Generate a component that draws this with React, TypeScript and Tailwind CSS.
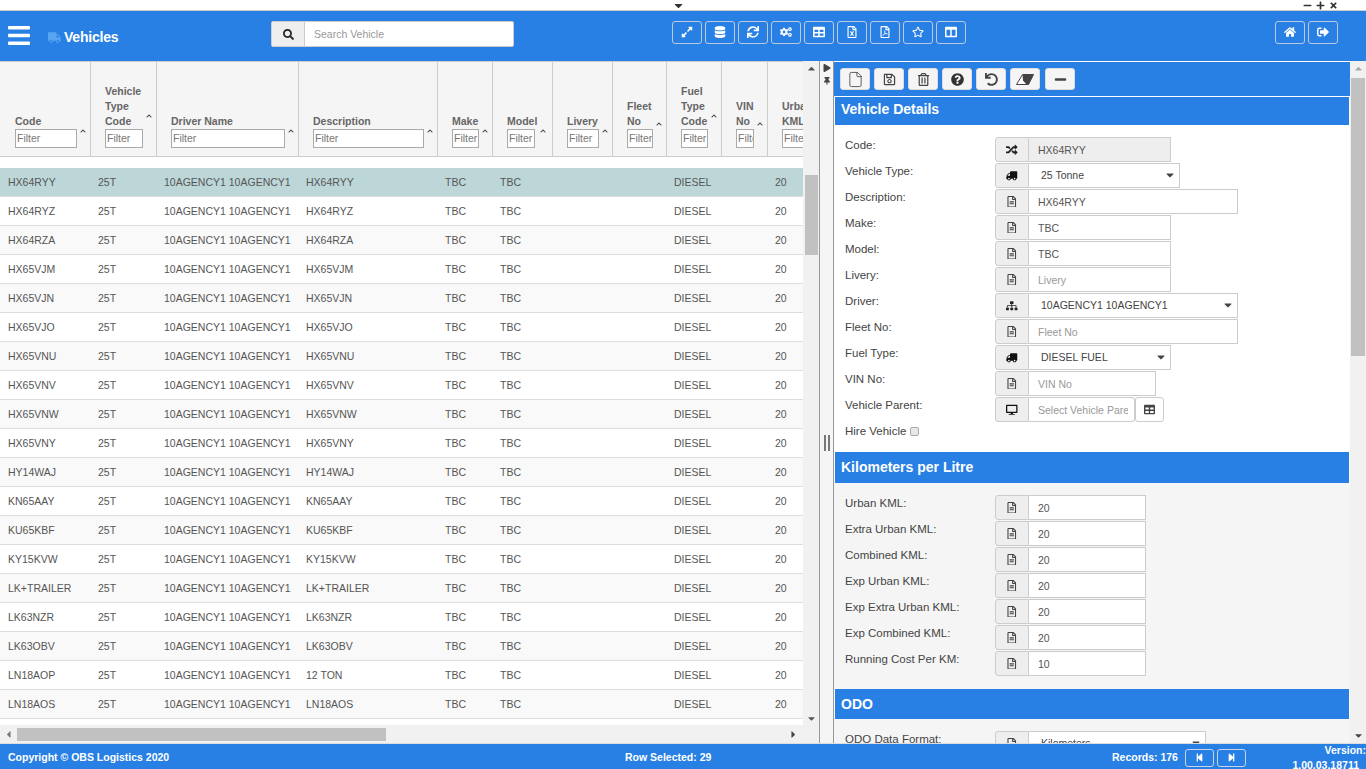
import type { ReactNode } from 'react';
import {
  FaBars, FaCaretDown, FaCaretLeft, FaCaretRight, FaCaretUp, FaChevronUp, FaCogs, FaColumns, FaDatabase,
  FaDesktop, FaExpandAlt, FaHome, FaMinus, FaPlay, FaPlus, FaQuestionCircle, FaRandom, FaRegFileAlt,
  FaRegFileExcel, FaRegFilePdf, FaRegSave, FaRegStar, FaRegTrashAlt, FaSearch, FaSignOutAlt, FaSitemap,
  FaStepBackward, FaStepForward, FaSync, FaTable, FaThumbtack, FaTimes, FaTruck, FaUndo,
} from 'react-icons/fa';
import { File } from 'lucide-react';

const columns = [
  { key: 'code', label: ['Code'], cell: 'w-[91px]', filter: 'w-[62px]' },
  { key: 'type', label: ['Vehicle', 'Type', 'Code'], cell: 'w-[66px]', filter: 'w-[38px]' },
  { key: 'driver', label: ['Driver Name'], cell: 'w-[142px]', filter: 'w-[114px]' },
  { key: 'desc', label: ['Description'], cell: 'w-[139px]', filter: 'w-[111px]' },
  { key: 'make', label: ['Make'], cell: 'w-[55px]', filter: 'w-[27px]' },
  { key: 'model', label: ['Model'], cell: 'w-[60px]', filter: 'w-[28px]' },
  { key: 'livery', label: ['Livery'], cell: 'w-[60px]', filter: 'w-[32px]' },
  { key: 'fleet', label: ['Fleet', 'No'], cell: 'w-[54px]', filter: 'w-[26px]' },
  { key: 'fuel', label: ['Fuel', 'Type', 'Code'], cell: 'w-[55px]', filter: 'w-[27px]' },
  { key: 'vin', label: ['VIN', 'No'], cell: 'w-[46px]', filter: 'w-[18px]' },
  { key: 'urban', label: ['Urban', 'KML'], cell: 'w-[60px]', filter: 'w-[32px]' },
];

const codes = [
  'HX64RYY', 'HX64RYZ', 'HX64RZA', 'HX65VJM', 'HX65VJN', 'HX65VJO', 'HX65VNU', 'HX65VNV', 'HX65VNW', 'HX65VNY',
  'HY14WAJ', 'KN65AAY', 'KU65KBF', 'KY15KVW', 'LK+TRAILER', 'LK63NZR', 'LK63OBV', 'LN18AOP', 'LN18AOS',
];

const kmlFields = [
  ['Urban KML:', '20'],
  ['Extra Urban KML:', '20'],
  ['Combined KML:', '20'],
  ['Exp Urban KML:', '20'],
  ['Exp Extra Urban KML:', '20'],
  ['Exp Combined KML:', '20'],
  ['Running Cost Per KM:', '10'],
];

function HeaderButton({ children }: { children: ReactNode }) {
  return (
    <button className="flex h-[23px] w-[30px] items-center justify-center rounded-[3px] border border-[#b9c9df] pb-[2px] text-[12px] text-white">
      {children}
    </button>
  );
}

function ToolButton({ children }: { children: ReactNode }) {
  return (
    <button className="flex h-[22px] w-[30px] items-center justify-center rounded-[3px] border border-[#ddd] bg-[#f5f5f5] text-[13px] text-[#444]">
      {children}
    </button>
  );
}

function SectionTitle({ children, size }: { children: ReactNode; size: string }) {
  return (
    <div className={`${size} mx-px flex items-center bg-[#2980e4] pl-[6px] text-[14px] font-bold text-white`}>
      {children}
    </div>
  );
}

function Addon({ children }: { children: ReactNode }) {
  return (
    <span className="flex h-[25px] w-[34px] shrink-0 items-center justify-center rounded-l-[3px] border border-[#ccc] bg-[#eee] text-[11.5px] text-[#444]">
      {children}
    </span>
  );
}

function FormRow({ label, children }: { label: string; children: ReactNode }) {
  return (
    <div className="flex h-[26px] pl-[11px]">
      <label className="w-[150px] shrink-0 pt-[1px] text-[11.5px] leading-[14px] text-[#444]">{label}</label>
      {children}
    </div>
  );
}

function TextField({ label, value, placeholder, width, disabled }: {
  label: string;
  value?: string;
  placeholder?: string;
  width: string;
  disabled?: boolean;
}) {
  return (
    <FormRow label={label}>
      <div className={`${width} flex`}>
        <Addon>{disabled ? <FaRandom className="text-[#222]" /> : <FaRegFileAlt />}</Addon>
        <input
          readOnly
          value={value ?? ''}
          placeholder={placeholder}
          className={`h-[25px] min-w-0 flex-1 border border-l-0 border-[#ccc] pl-[9px] text-[10.5px] text-[#555] outline-none placeholder:text-[#999] ${disabled ? 'bg-[#eee]' : 'bg-white'}`}
        />
      </div>
    </FormRow>
  );
}

function SelectField({ label, value, width, icon }: { label: string; value: string; width: string; icon: ReactNode }) {
  return (
    <FormRow label={label}>
      <div className={`${width} flex`}>
        <Addon>{icon}</Addon>
        <div className="flex h-[25px] min-w-0 flex-1 items-center justify-between border border-l-0 border-[#ccc] bg-white pl-[12px] pr-[3px] pt-px text-[10.5px] text-[#444]">
          <span>{value}</span>
          <FaCaretDown className="mb-[3px] text-[12px] text-[#444]" />
        </div>
      </div>
    </FormRow>
  );
}

export default function App() {
  return (
    <div className="flex h-[769px] w-[1366px] flex-col overflow-hidden bg-white font-['Liberation_Sans',Arial,sans-serif]">
      {/* top strip */}
      <div className="flex h-[11px] shrink-0 items-center border-b border-[#ccc] text-[#333]">
        <FaCaretDown className="ml-[672px] text-[13px]" />
        <div className="ml-[618px] mt-px flex gap-[4px] text-[9px]">
          <FaMinus />
          <FaPlus />
          <FaTimes />
        </div>
      </div>

      {/* header */}
      <header className="flex h-[50px] shrink-0 bg-[#2980e4] pl-[8px] pt-[10px]">
        <FaBars className="mt-[2px] h-[25px] w-[22px] text-white" />
        <FaTruck className="ml-[18px] mt-[10px] text-[13px] text-[#5aa5f0]" />
        <span className="ml-[3px] mt-[8px] w-[207px] text-[14px] font-bold leading-[16px] tracking-[-0.2px] text-white">Vehicles</span>
        <div className="flex h-[26px] w-[243px] rounded-[2px] border border-[#ccc] bg-white">
          <span className="flex w-[33px] items-center justify-center border-r border-[#ccc] bg-[#eee] text-[11px] text-[#222]">
            <FaSearch />
          </span>
          <input placeholder="Search Vehicle" readOnly className="min-w-0 flex-1 pl-[9px] pt-px text-[10.5px] outline-none placeholder:text-[#999]" />
        </div>
        <div className="ml-[158px] flex gap-[3px]">
          <HeaderButton><FaExpandAlt /></HeaderButton>
          <HeaderButton><FaDatabase /></HeaderButton>
          <HeaderButton><FaSync /></HeaderButton>
          <HeaderButton><FaCogs /></HeaderButton>
          <HeaderButton><FaTable /></HeaderButton>
          <HeaderButton><FaRegFileExcel /></HeaderButton>
          <HeaderButton><FaRegFilePdf /></HeaderButton>
          <HeaderButton><FaRegStar /></HeaderButton>
          <HeaderButton><FaColumns /></HeaderButton>
        </div>
        <div className="ml-[309px] flex gap-[3px]">
          <HeaderButton><FaHome /></HeaderButton>
          <HeaderButton><FaSignOutAlt /></HeaderButton>
        </div>
      </header>

      <div className="flex min-h-0 flex-1">
        {/* vehicle list */}
        <div className="flex w-[819px] shrink-0 flex-col">
          <div className="flex min-h-0 flex-1">
            <div className="w-[803px] shrink-0 overflow-hidden">
              <div className="flex h-[96px] w-[900px] border-y border-[#ccc] bg-[#f5f5f5]">
                {columns.map((col) => (
                  <div key={col.key} className={`${col.cell} flex shrink-0 items-end border-r border-[#ccc] pb-[8px] pl-[14px] first:pl-[15px]`}>
                    <div className="flex items-center">
                      <div>
                        <div className="text-[10.5px] font-bold leading-[15px] text-[#666]">
                          {col.label.map((line) => (
                            <div key={line}>{line}</div>
                          ))}
                        </div>
                        <input
                          readOnly
                          placeholder="Filter"
                          className={`${col.filter} block h-[19px] border border-[#aaa] bg-white pb-[2px] pl-px text-[10.5px] outline-none placeholder:text-[#777]`}
                        />
                      </div>
                      <FaChevronUp className="ml-[3px] text-[6px] text-[#444]" />
                    </div>
                  </div>
                ))}
              </div>
              <div className="mt-[11px]">
                {codes.map((code, i) => (
                  <div
                    key={code}
                    className={`flex h-[29px] w-[900px] items-center border-b border-[#ddd] pt-px text-[10.5px] text-[#555] ${i === 0 ? 'bg-[#bdd7d9]' : i % 2 === 0 ? 'bg-[#f9f9f9]' : 'bg-white'}`}
                  >
                    <span className="w-[90px] shrink-0 pl-2">{code}</span>
                    <span className="w-[66px] shrink-0 pl-2">25T</span>
                    <span className="w-[142px] shrink-0 pl-2">10AGENCY1 10AGENCY1</span>
                    <span className="w-[139px] shrink-0 pl-2">{code === 'LN18AOP' ? '12 TON' : code}</span>
                    <span className="w-[55px] shrink-0 pl-2">TBC</span>
                    <span className="w-[174px] shrink-0 pl-2">TBC</span>
                    <span className="w-[101px] shrink-0 pl-2">DIESEL</span>
                    <span className="shrink-0 pl-2">20</span>
                  </div>
                ))}
              </div>
            </div>
            {/* list scrollbar */}
            <div className="flex w-[16px] shrink-0 flex-col items-center bg-[#f1f1f1] text-[#555]">
              <FaCaretUp className="mt-[2px] text-[11px]" />
              <div className="mt-[101px] h-[80px] w-[13px] bg-[#c1c1c1]" />
              <FaCaretDown className="mt-auto mb-[1px] text-[11px]" />
            </div>
          </div>
          <div className="flex h-[18px] shrink-0 items-center bg-[#f1f1f1] text-[#777]">
            <FaCaretLeft className="ml-[3px] text-[11px]" />
            <div className="ml-[3px] h-[13px] w-[369px] bg-[#c1c1c1]" />
            <FaCaretRight className="ml-[402px] text-[11px] text-[#444]" />
          </div>
        </div>

        {/* splitter */}
        <div className="flex w-[15px] shrink-0 flex-col items-center border-x border-[#999] bg-[#f5f5f5] text-[#444]">
          <FaPlay className="mt-[3px] text-[8px]" />
          <FaThumbtack className="mt-[5px] text-[8px]" />
          <div className="mt-[350px] flex gap-[2px]">
            <span className="h-[16px] w-[2px] bg-[#777]" />
            <span className="h-[16px] w-[2px] bg-[#777]" />
          </div>
        </div>

        {/* details panel */}
        <div className="min-w-0 flex-1 overflow-hidden border-t border-white">
          <div className="flex h-[34px] gap-[4px] bg-[#2980e4] pl-[6px] pt-[6px]">
            <ToolButton><File size={17} strokeWidth={1.2} /></ToolButton>
            <ToolButton><FaRegSave /></ToolButton>
            <ToolButton><FaRegTrashAlt /></ToolButton>
            <ToolButton><FaQuestionCircle className="text-[#333]" /></ToolButton>
            <ToolButton><FaUndo /></ToolButton>
            <ToolButton>
              <svg width="18" height="11" viewBox="0 0 18 11">
                <path d="M6.5 .5h11l-5 10H.5z" fill="#fff" stroke="#444" strokeWidth="1" />
                <path d="M6.5 .5h11l-5 10h-2l-3.500-4z" fill="#444" />
              </svg>
            </ToolButton>
            <div className="ml-px">
              <ToolButton><FaMinus /></ToolButton>
            </div>
          </div>
          <div className="mt-px">
            <SectionTitle size="h-[28px] pb-[4px]">Vehicle Details</SectionTitle>
            <div className="pb-[3px] pt-[12px]">
              <TextField label="Code:" value="HX64RYY" width="w-[176px]" disabled />
              <SelectField label="Vehicle Type:" value="25 Tonne" width="w-[185px]" icon={<FaTruck className="-scale-x-100 text-[#111]" />} />
              <TextField label="Description:" value="HX64RYY" width="w-[243px]" />
              <TextField label="Make:" value="TBC" width="w-[176px]" />
              <TextField label="Model:" value="TBC" width="w-[176px]" />
              <TextField label="Livery:" placeholder="Livery" width="w-[176px]" />
              <SelectField label="Driver:" value="10AGENCY1 10AGENCY1" width="w-[243px]" icon={<FaSitemap className="text-[#222]" />} />
              <TextField label="Fleet No:" placeholder="Fleet No" width="w-[243px]" />
              <SelectField label="Fuel Type:" value="DIESEL FUEL" width="w-[176px]" icon={<FaTruck className="-scale-x-100 text-[#111]" />} />
              <TextField label="VIN No:" placeholder="VIN No" width="w-[161px]" />
              <FormRow label="Vehicle Parent:">
                <div className="flex">
                  <Addon><FaDesktop className="text-[#111]" /></Addon>
                  <input
                    readOnly
                    placeholder="Select Vehicle Parent"
                    className="h-[25px] w-[106px] rounded-r-[3px] border border-l-0 border-[#ccc] bg-white pl-[9px] pr-[6px] text-[10.5px] outline-none placeholder:text-[#999]"
                  />
                  <span className="flex h-[25px] w-[29px] items-center justify-center rounded-[3px] border border-[#ccc] bg-white text-[11px] text-[#444]">
                    <FaTable />
                  </span>
                </div>
              </FormRow>
              <div className="flex h-[26px] items-start pl-[11px] pt-px text-[11.5px] leading-[14px] text-[#444]">
                Hire Vehicle
                <input type="checkbox" readOnly className="ml-[4px] mt-[3px] h-[9px] w-[9px] appearance-none rounded-[2px] border border-[#aaa] bg-[#e8e8e8]" />
              </div>
            </div>
            <SectionTitle size="h-[31px]">Kilometers per Litre</SectionTitle>
            <div className="bg-[#f5f5f5] py-[12px]">
              {kmlFields.map(([label, value]) => (
                <TextField key={label} label={label} value={value} width="w-[151px]" />
              ))}
            </div>
            <SectionTitle size="h-[30px]">ODO</SectionTitle>
            <div className="bg-[#f5f5f5] pt-[12px]">
              <SelectField label="ODO Data Format:" value="Kilometers" width="w-[211px]" icon={<FaRegFileAlt />} />
            </div>
          </div>
        </div>

        {/* page scrollbar */}
        <div className="flex w-[16px] shrink-0 flex-col items-center bg-[#f1f1f1] text-[#777]">
          <FaCaretUp className="mt-[2px] text-[11px] text-[#aaa]" />
          <div className="mt-[4px] h-[278px] w-[14px] bg-[#c1c1c1]" />
          <FaCaretDown className="mt-auto mb-[2px] text-[11px] text-[#444]" />
        </div>
      </div>

      {/* footer */}
      <footer className="flex h-[26px] shrink-0 items-center border-t border-[#ddd] bg-[#2980e4] pl-[8px] pt-[2px] text-[10.5px] font-bold text-white">
        <span className="w-[617px] shrink-0">Copyright © OBS Logistics 2020</span>
        <span className="w-[487px] shrink-0">Row Selected: 29</span>
        <span>Records: 176</span>
        <button className="ml-[7px] flex h-[18px] w-[29px] items-center justify-center rounded-[3px] border border-[#c5d3e6] text-[9px]"><FaStepBackward /></button>
        <button className="ml-[3px] flex h-[18px] w-[29px] items-center justify-center rounded-[3px] border border-[#c5d3e6] text-[9px]"><FaStepForward /></button>
        <div className="ml-auto mt-[1px] w-[118px] text-right leading-[15px]">
          <div>Version:</div>
          <div className="pr-[7px]">1.00.03.18711</div>
        </div>
      </footer>
    </div>
  );
}
